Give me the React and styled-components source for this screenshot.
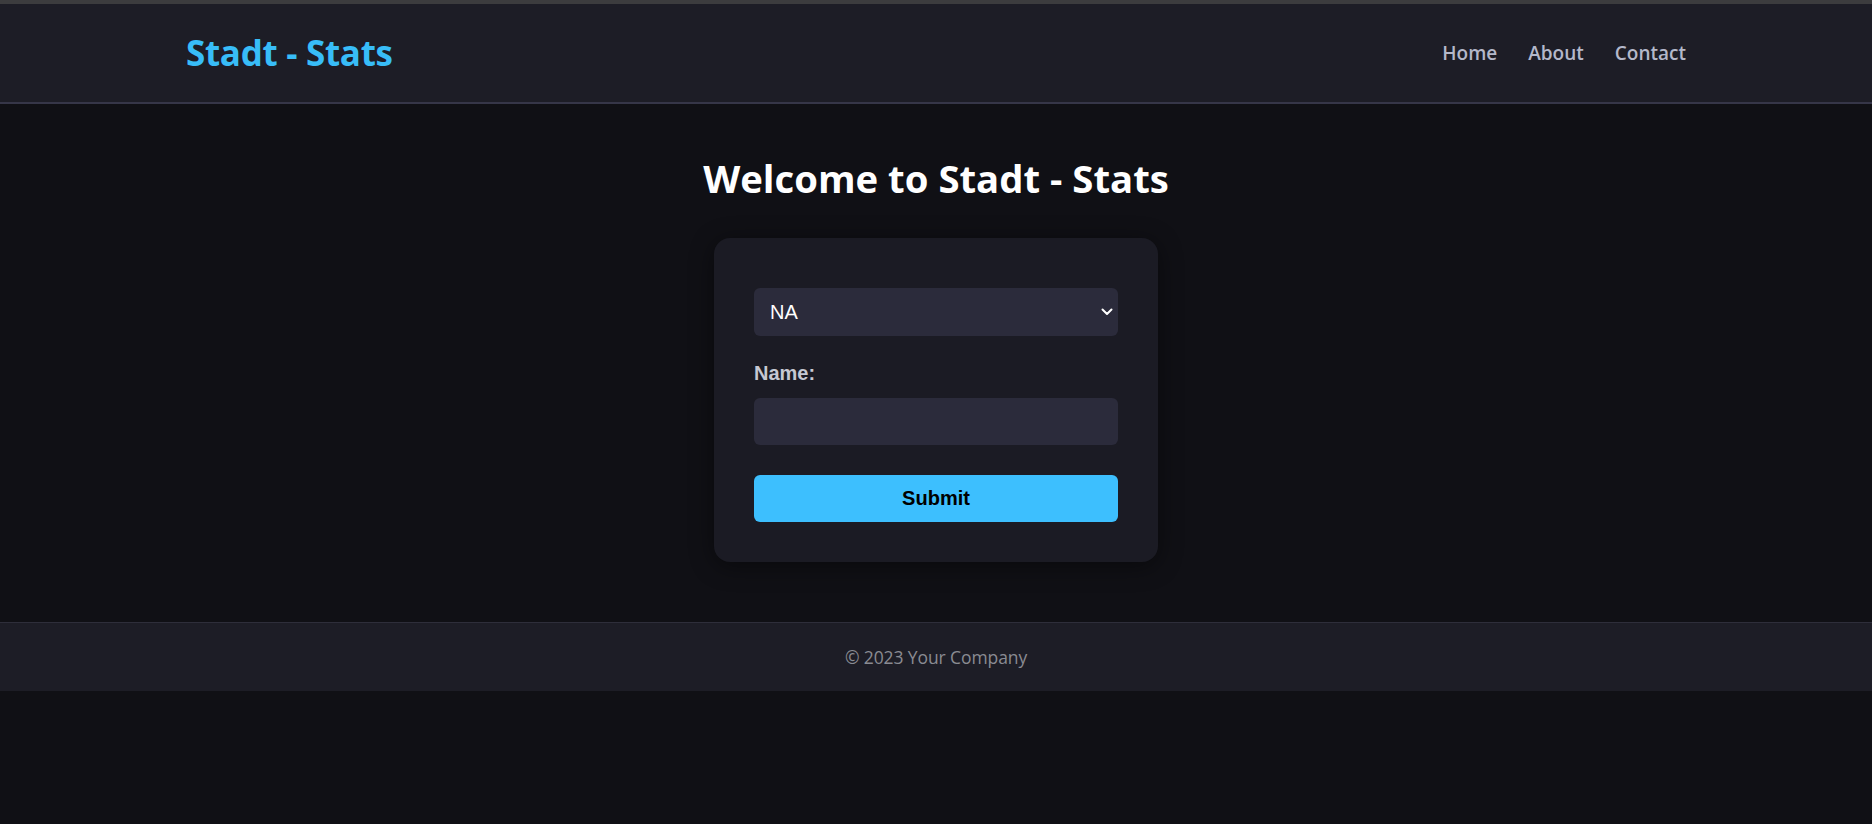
import React from "react";
import styled, { createGlobalStyle } from "styled-components";

const GlobalStyle = createGlobalStyle`
  html, body {
    margin: 0;
    padding: 0;
    background: #101015;
  }
  body {
    font-family: "Open Sans", "Noto Sans", sans-serif;
    color: #ffffff;
  }
  * { box-sizing: border-box; }
`;

const Header = styled.header`
  background: #1d1d26;
  border-top: 4px solid #3c3c3e;
  border-bottom: 2px solid #363648;
  height: 104px;
`;

const HeaderInner = styled.div`
  max-width: 1500px;
  height: 100%;
  margin: 0 auto;
  display: flex;
  align-items: center;
  justify-content: space-between;
`;

const Logo = styled.a`
  font-size: 35px;
  font-weight: 700;
  color: #38bdf8;
  text-decoration: none;
  letter-spacing: -0.3px;
  margin-top: -1px;
`;

const Nav = styled.nav`
  display: flex;
  gap: 31px;
`;

const NavLink = styled.a`
  font-size: 19px;
  font-weight: 600;
  color: #b4b8ca;
  text-decoration: none;
`;

const Main = styled.main`
  display: flex;
  flex-direction: column;
  align-items: center;
  padding: 50px 0 60px;
`;

const Title = styled.h1`
  margin: 0 0 36px;
  font-size: 38.3px;
  line-height: 48px;
  font-weight: 700;
  color: #ffffff;
`;

const Card = styled.form`
  width: 444px;
  background: #1b1b24;
  border-radius: 16px;
  padding: 50px 40px 40px;
  box-shadow: 0 4px 24px rgba(0, 0, 0, 0.45);
  display: flex;
  flex-direction: column;
`;

const SelectWrap = styled.div`
  position: relative;
`;

const Select = styled.select`
  appearance: none;
  width: 100%;
  height: 48px;
  border: none;
  border-radius: 6px;
  background: #2b2b3b;
  color: #ffffff;
  font-family: "Liberation Sans", Arial, sans-serif;
  font-size: 20px;
  padding: 0 30px 0 16px;
  outline: none;
`;

const Chevron = styled.svg`
  position: absolute;
  right: 5px;
  top: 50%;
  transform: translateY(-50%);
  pointer-events: none;
`;

const Label = styled.label`
  margin-top: 25px;
  font-family: "Liberation Sans", Arial, sans-serif;
  font-size: 20px;
  line-height: 24px;
  font-weight: 700;
  color: #c6c8d2;
`;

const Input = styled.input`
  margin-top: 13px;
  width: 100%;
  height: 47px;
  border: none;
  border-radius: 6px;
  background: #2b2b3b;
  color: #ffffff;
  font-size: 20px;
  padding: 0 14px;
  outline: none;
`;

const Button = styled.button`
  margin-top: 30px;
  width: 100%;
  height: 47px;
  border: none;
  border-radius: 6px;
  background: #3dbffe;
  color: #000000;
  font-family: "Liberation Sans", Arial, sans-serif;
  font-size: 20px;
  font-weight: 700;
  cursor: pointer;
`;

const Footer = styled.footer`
  background: #1d1d26;
  border-top: 1px solid #2e2e3a;
  height: 69px;
  display: flex;
  align-items: center;
  justify-content: center;
`;

const FooterText = styled.p`
  margin: 0;
  font-size: 17.5px;
  letter-spacing: -0.1px;
  color: #8a8b92;
`;

export default function App() {
  return (
    <>
      <GlobalStyle />
      <Header>
        <HeaderInner>
          <Logo href="#">Stadt - Stats</Logo>
          <Nav>
            <NavLink href="#">Home</NavLink>
            <NavLink href="#">About</NavLink>
            <NavLink href="#">Contact</NavLink>
          </Nav>
        </HeaderInner>
      </Header>
      <Main>
        <Title>Welcome to Stadt - Stats</Title>
        <Card onSubmit={(e) => e.preventDefault()}>
          <SelectWrap>
            <Select defaultValue="NA">
              <option value="NA">NA</option>
              <option value="EU">EU</option>
            </Select>
            <Chevron width="12" height="8" viewBox="0 0 12 8">
              <path d="M1.5 1.5 L6 6 L10.5 1.5" fill="none" stroke="#ffffff" strokeWidth="2" strokeLinecap="round" strokeLinejoin="round" />
            </Chevron>
          </SelectWrap>
          <Label htmlFor="name">Name:</Label>
          <Input id="name" type="text" />
          <Button type="submit">Submit</Button>
        </Card>
      </Main>
      <Footer>
        <FooterText>© 2023 Your Company</FooterText>
      </Footer>
    </>
  );
}
